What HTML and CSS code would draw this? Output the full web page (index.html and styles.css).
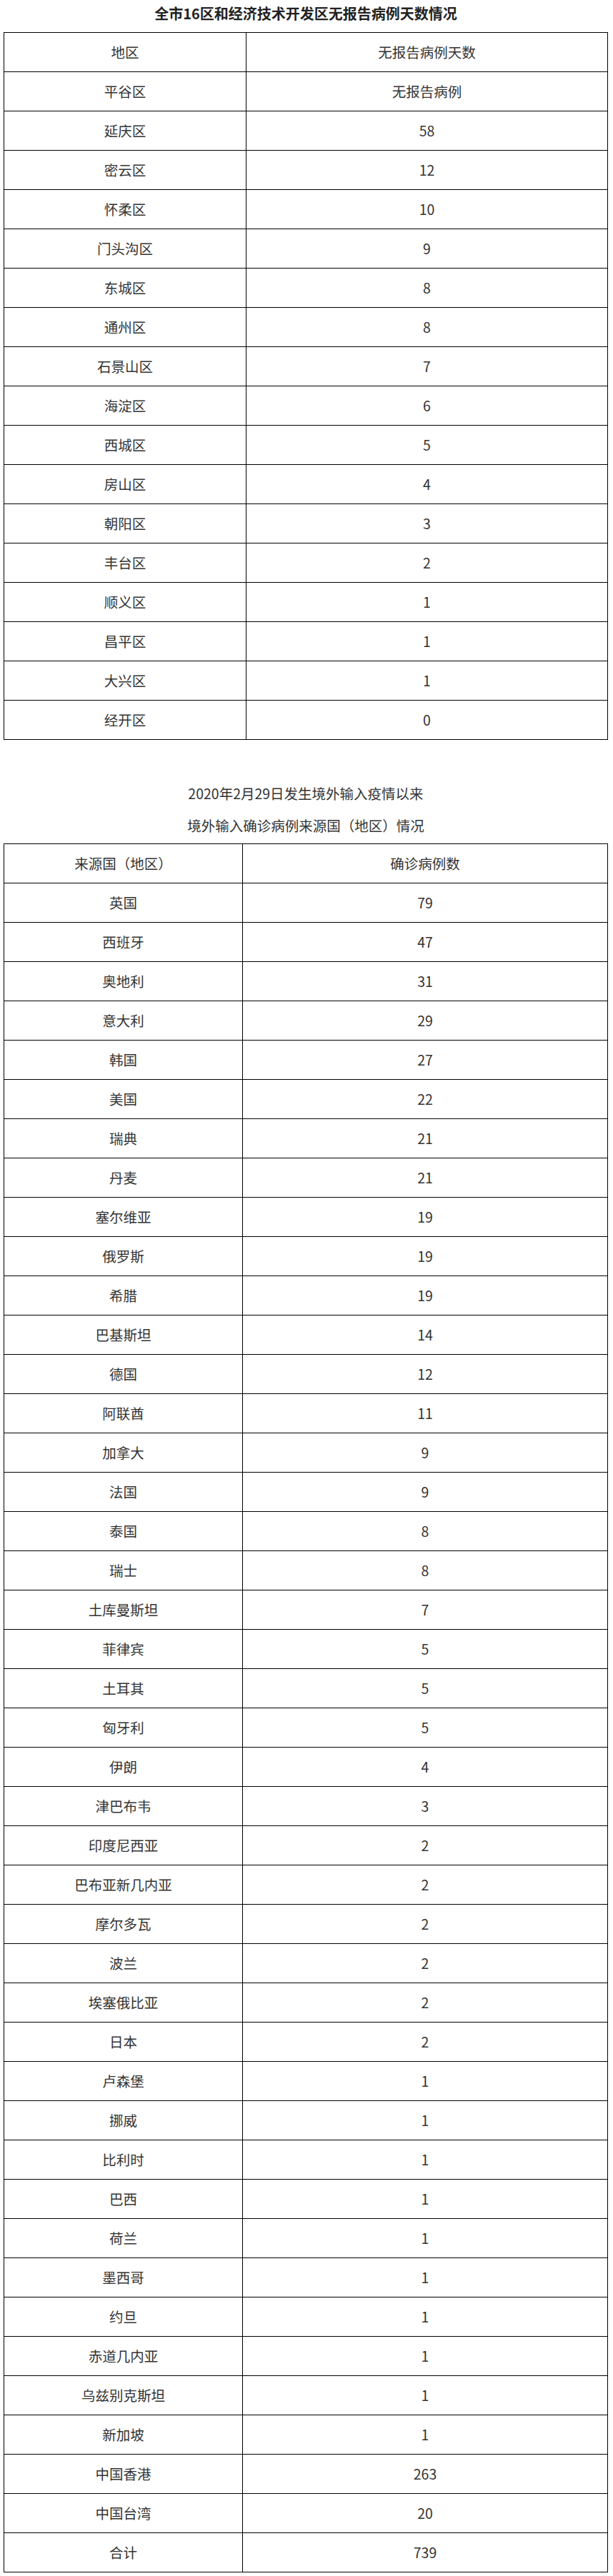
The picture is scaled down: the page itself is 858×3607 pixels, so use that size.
FILE: index.html
```html
<!DOCTYPE html>
<html lang="zh-CN">
<head>
<meta charset="utf-8">
<title>全市16区和经济技术开发区无报告病例天数情况</title>
<link rel="stylesheet" href="styles.css">
</head>
<body>
<div class="page">
  <h2 class="title">全市16区和经济技术开发区无报告病例天数情况</h2>
  <table class="data t1">
    <colgroup><col class="c1a"><col></colgroup>
    <tbody>
      <tr><td>地区</td><td>无报告病例天数</td></tr>
      <tr><td>平谷区</td><td>无报告病例</td></tr>
      <tr><td>延庆区</td><td>58</td></tr>
      <tr><td>密云区</td><td>12</td></tr>
      <tr><td>怀柔区</td><td>10</td></tr>
      <tr><td>门头沟区</td><td>9</td></tr>
      <tr><td>东城区</td><td>8</td></tr>
      <tr><td>通州区</td><td>8</td></tr>
      <tr><td>石景山区</td><td>7</td></tr>
      <tr><td>海淀区</td><td>6</td></tr>
      <tr><td>西城区</td><td>5</td></tr>
      <tr><td>房山区</td><td>4</td></tr>
      <tr><td>朝阳区</td><td>3</td></tr>
      <tr><td>丰台区</td><td>2</td></tr>
      <tr><td>顺义区</td><td>1</td></tr>
      <tr><td>昌平区</td><td>1</td></tr>
      <tr><td>大兴区</td><td>1</td></tr>
      <tr><td>经开区</td><td>0</td></tr>
    </tbody>
  </table>

  <p class="sub first">2020年2月29日发生境外输入疫情以来</p>
  <p class="sub">境外输入确诊病例来源国（地区）情况</p>

  <table class="data t2">
    <colgroup><col class="c1b"><col></colgroup>
    <tbody>
      <tr><td>来源国（地区）</td><td>确诊病例数</td></tr>
      <tr><td>英国</td><td>79</td></tr>
      <tr><td>西班牙</td><td>47</td></tr>
      <tr><td>奥地利</td><td>31</td></tr>
      <tr><td>意大利</td><td>29</td></tr>
      <tr><td>韩国</td><td>27</td></tr>
      <tr><td>美国</td><td>22</td></tr>
      <tr><td>瑞典</td><td>21</td></tr>
      <tr><td>丹麦</td><td>21</td></tr>
      <tr><td>塞尔维亚</td><td>19</td></tr>
      <tr><td>俄罗斯</td><td>19</td></tr>
      <tr><td>希腊</td><td>19</td></tr>
      <tr><td>巴基斯坦</td><td>14</td></tr>
      <tr><td>德国</td><td>12</td></tr>
      <tr><td>阿联酋</td><td>11</td></tr>
      <tr><td>加拿大</td><td>9</td></tr>
      <tr><td>法国</td><td>9</td></tr>
      <tr><td>泰国</td><td>8</td></tr>
      <tr><td>瑞士</td><td>8</td></tr>
      <tr><td>土库曼斯坦</td><td>7</td></tr>
      <tr><td>菲律宾</td><td>5</td></tr>
      <tr><td>土耳其</td><td>5</td></tr>
      <tr><td>匈牙利</td><td>5</td></tr>
      <tr><td>伊朗</td><td>4</td></tr>
      <tr><td>津巴布韦</td><td>3</td></tr>
      <tr><td>印度尼西亚</td><td>2</td></tr>
      <tr><td>巴布亚新几内亚</td><td>2</td></tr>
      <tr><td>摩尔多瓦</td><td>2</td></tr>
      <tr><td>波兰</td><td>2</td></tr>
      <tr><td>埃塞俄比亚</td><td>2</td></tr>
      <tr><td>日本</td><td>2</td></tr>
      <tr><td>卢森堡</td><td>1</td></tr>
      <tr><td>挪威</td><td>1</td></tr>
      <tr><td>比利时</td><td>1</td></tr>
      <tr><td>巴西</td><td>1</td></tr>
      <tr><td>荷兰</td><td>1</td></tr>
      <tr><td>墨西哥</td><td>1</td></tr>
      <tr><td>约旦</td><td>1</td></tr>
      <tr><td>赤道几内亚</td><td>1</td></tr>
      <tr><td>乌兹别克斯坦</td><td>1</td></tr>
      <tr><td>新加坡</td><td>1</td></tr>
      <tr><td>中国香港</td><td>263</td></tr>
      <tr><td>中国台湾</td><td>20</td></tr>
      <tr><td>合计</td><td>739</td></tr>
    </tbody>
  </table>
</div>
</body>
</html>
```

FILE: styles.css
```css
html, body {
  margin: 0;
  padding: 0;
  background: #ffffff;
}

body {
  font-family: "Noto Sans CJK SC", "Noto Sans", sans-serif;
  color: #333333;
}

.page {
  width: 846px;
  margin-left: 5px;
}

.title {
  margin: 0 0 7px 0;
  height: 38px;
  line-height: 38px;
  font-size: 20px;
  font-weight: bold;
  text-align: center;
  color: #222222;
}

.data {
  width: 846px;
  border-collapse: collapse;
  table-layout: fixed;
}

.data td {
  border: 1px solid #000000;
  height: 54px;
  padding: 0;
  text-align: center;
  vertical-align: middle;
  font-size: 19.5px;
  line-height: 24px;
  color: #333333;
}

.c1a {
  width: 339px;
}

.c1b {
  width: 334px;
}

.sub {
  margin: 0;
  height: 45px;
  line-height: 45px;
  font-size: 19.5px;
  text-align: center;
  color: #333333;
}

.sub.first {
  margin-top: 52px;
}

.t2 {
  margin-top: 3px;
}
```
